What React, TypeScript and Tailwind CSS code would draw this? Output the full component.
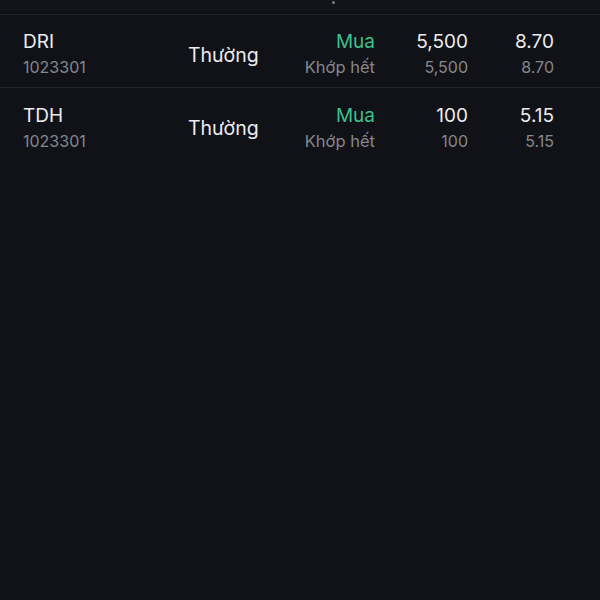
const orders = [
  { code: "DRI", account: "1023301", type: "Thường", side: "Mua", status: "Khớp hết", qty: "5,500", matchedQty: "5,500", price: "8.70", matchedPrice: "8.70" },
  { code: "TDH", account: "1023301", type: "Thường", side: "Mua", status: "Khớp hết", qty: "100", matchedQty: "100", price: "5.15", matchedPrice: "5.15" },
];

export default function App() {
  return (
    <div className="w-[600px] h-[600px] bg-[#111217] font-['Inter',sans-serif] overflow-hidden">
      {/* header cut off above */}
      <div className="h-[11px] bg-[#131419] flex justify-center">
        <div className="ml-[66px] mt-[1px] w-[3px] h-[3px] rounded-full bg-[#7d7e83]" />
      </div>
      <div className="h-[3px] bg-[#0d0e12]" />
      <div className="h-[1px] bg-[#202227]" />

      {orders.map((o, i) => (
        <div
          key={o.code}
          className={`flex items-center h-[73px] pt-[5px] pl-[23px] pr-[46px] ${i < orders.length - 1 ? "border-b border-[#24262b]" : ""}`}
        >
          <div className="w-[165px] flex flex-col">
            <span className="text-[19px] leading-[24px] text-[#ececee]">{o.code}</span>
            <span className="mt-[3px] text-[16px] leading-[20px] text-[#86878c]">{o.account}</span>
          </div>
          <div className="w-[102px] mt-[4px] text-[19.5px] text-[#ececee]">{o.type}</div>
          <div className="w-[85px] flex flex-col items-end">
            <span className="text-[19px] leading-[24px] text-[#3dbf8e]">{o.side}</span>
            <span className="mt-[3px] text-[16.5px] leading-[20px] text-[#86878c]">{o.status}</span>
          </div>
          <div className="w-[93px] flex flex-col items-end">
            <span className="text-[19px] leading-[24px] text-[#ececee]">{o.qty}</span>
            <span className="mt-[3px] text-[16px] leading-[20px] text-[#86878c]">{o.matchedQty}</span>
          </div>
          <div className="w-[86px] flex flex-col items-end">
            <span className="text-[19px] leading-[24px] text-[#ececee]">{o.price}</span>
            <span className="mt-[3px] text-[16px] leading-[20px] text-[#86878c]">{o.matchedPrice}</span>
          </div>
        </div>
      ))}
    </div>
  );
}
